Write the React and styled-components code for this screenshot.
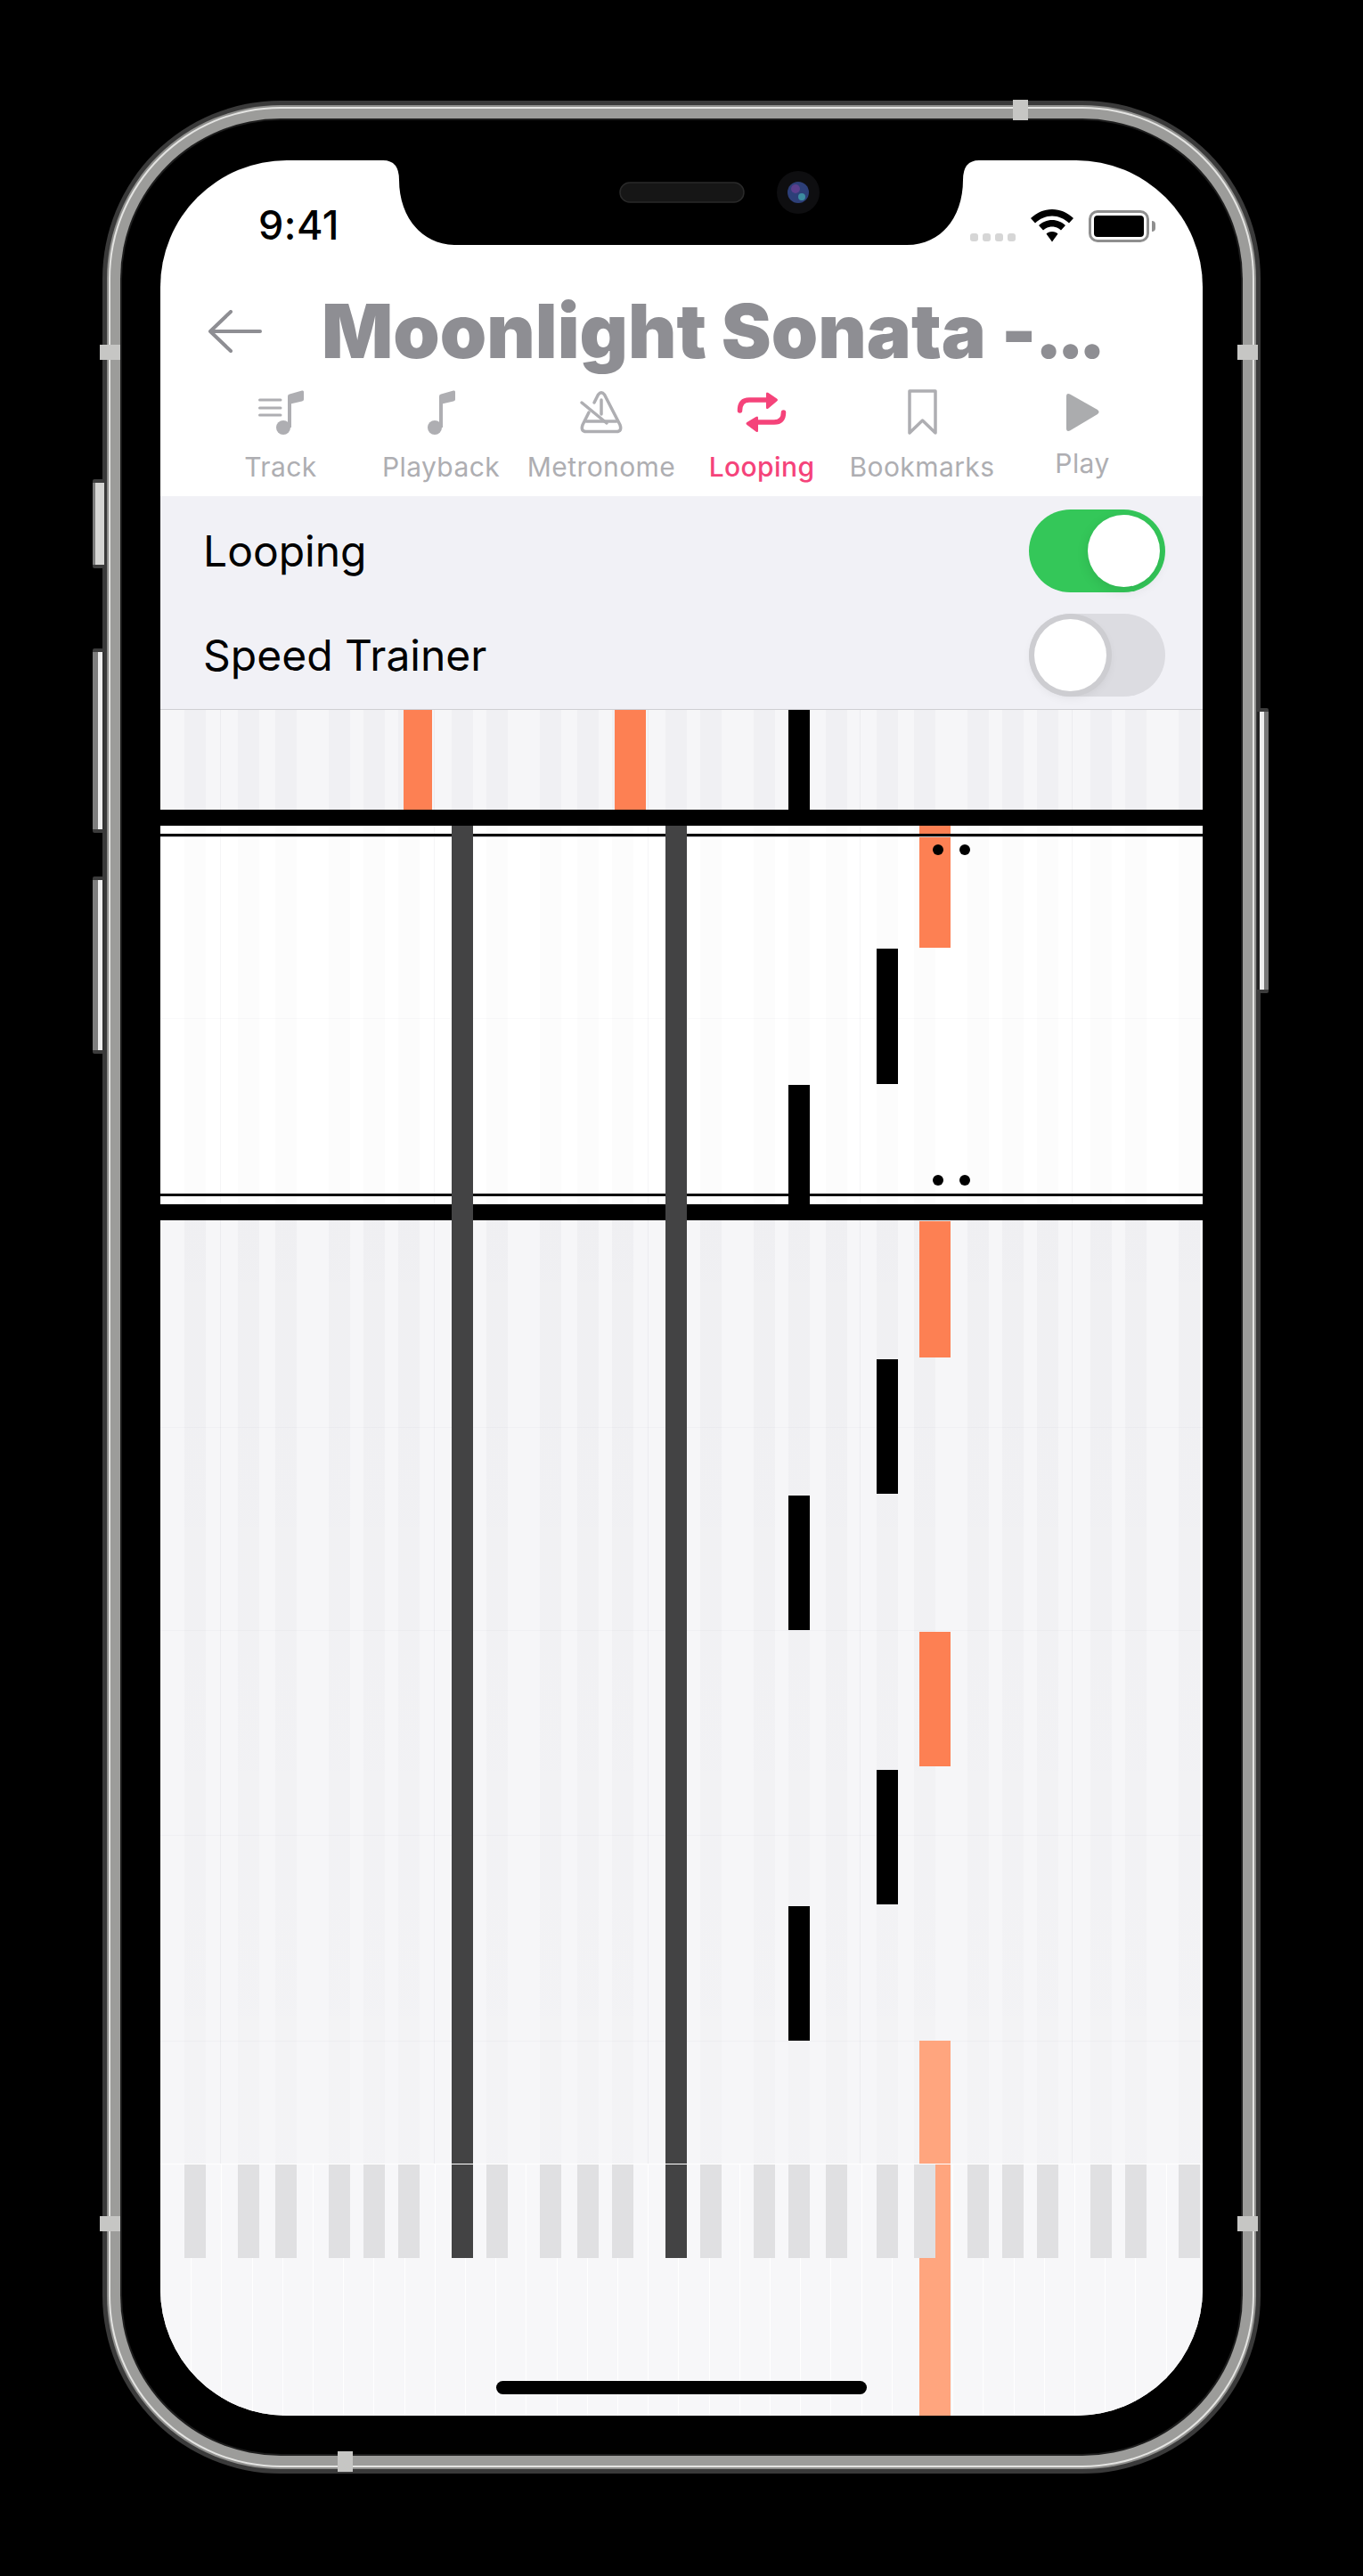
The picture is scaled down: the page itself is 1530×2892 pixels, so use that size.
import React from 'react'
import styled, { createGlobalStyle } from 'styled-components'

const GlobalStyle = createGlobalStyle`
    html, body {
        margin: 0;
        background: #000;
    }
`

const ROLL_TOP = 797
const blackKeys = [207, 267, 309, 369, 408, 447, 507, 546, 606, 648, 687, 747, 786, 846, 885, 927, 984, 1026, 1086, 1125, 1164, 1224, 1263, 1323]
const octaveLines = [247, 487, 727, 965, 1203]
const whiteKeyLines = Array.from({ length: 33 }, (_, i) => 180 + 34.2 * (i + 1))

const notes = [
    { x: 453, w: 32, y: 797, h: 112, kind: 'orange' },
    { x: 690, w: 35, y: 797, h: 112, kind: 'orange' },
    { x: 885, w: 24, y: 797, h: 112, kind: 'black' },
    { x: 507, w: 24, y: 927, h: 1608, kind: 'dark' },
    { x: 747, w: 24, y: 927, h: 1608, kind: 'dark' },
    { x: 1032, w: 35, y: 927, h: 137, kind: 'orange' },
    { x: 984, w: 24, y: 1065, h: 152, kind: 'black' },
    { x: 885, w: 24, y: 1218, h: 152, kind: 'black' },
    { x: 1032, w: 35, y: 1371, h: 153, kind: 'orange' },
    { x: 984, w: 24, y: 1526, h: 151, kind: 'black' },
    { x: 885, w: 24, y: 1679, h: 151, kind: 'black' },
    { x: 1032, w: 35, y: 1832, h: 151, kind: 'orange' },
    { x: 984, w: 24, y: 1987, h: 151, kind: 'black' },
    { x: 885, w: 24, y: 2140, h: 151, kind: 'black' },
    { x: 1032, w: 35, y: 2291, h: 421, kind: 'light' },
]

const beatLines = [1143, 1602, 1830, 2060, 2291]

const repeatDots = [
    { x: 1053, y: 954 },
    { x: 1083, y: 954 },
    { x: 1053, y: 1325 },
    { x: 1083, y: 1325 },
]

const tabs = [
    { label: 'Track', icon: <TrackIcon /> },
    { label: 'Playback', icon: <NoteIcon /> },
    { label: 'Metronome', icon: <MetronomeIcon /> },
    { label: 'Looping', icon: <LoopIcon />, active: true },
    { label: 'Bookmarks', icon: <BookmarkIcon /> },
    { label: 'Play', icon: <PlayIcon />, raised: true },
]

const Page = styled.div`
    width: 1530px;
    height: 2892px;
    box-sizing: border-box;
    padding: 135px 137px;
    background: #000;
    overflow: hidden;
`

const Device = styled.div`
    position: relative;
    width: 1256px;
    height: 2620px;
    box-sizing: border-box;
    padding: 45px 43px 43px;
    background: #000;
    border-radius: 178px;
    box-shadow:
        0 0 0 2px #1d1d1d,
        0 0 0 13px #9c9c9a,
        0 0 0 15px #e4e4e2,
        0 0 0 17px #8f8f8d,
        0 0 0 22px #3a3a3a;
`

const SideButton = styled.div`
    position: absolute;
    width: 13px;
    top: ${props => props.$top}px;
    height: ${props => props.$height}px;
    ${props => props.$right ? 'right: -31px;' : 'left: -33px;'}
    box-sizing: border-box;
    background: ${props => props.$mute ? 'linear-gradient(90deg, #7c7c7c 0 25%, #d5d5d3 25% 100%)' : props.$right ? 'linear-gradient(90deg, #222 0 20%, #eee 20% 65%, #777 65% 100%)' : 'linear-gradient(90deg, #7e7e7e 0 45%, #eee 45% 85%, #333 85% 100%)'};
    border-top: 4px solid #3c3c3c;
    border-bottom: 4px solid #3c3c3c;
    border-radius: 2px;
`

const AntennaBand = styled.div`
    position: absolute;
    background: #c6c6c4;
    ${props => props.$horizontal ? `
        width: 17px;
        height: 23px;
        left: ${props.$pos}px;
        ${props.$bottom ? 'bottom: -20px;' : 'top: -23px;'}
    ` : `
        width: 23px;
        height: 17px;
        top: ${props.$pos}px;
        ${props.$right ? 'right: -19px;' : 'left: -25px;'}
    `}
`

const Screen = styled.div`
    position: relative;
    width: 1170px;
    height: 2532px;
    background: #fff;
    border-radius: 142px;
    overflow: hidden;
    font-family: Inter, sans-serif;
    display: flex;
    flex-direction: column;
`

const Notch = styled.svg`
    position: absolute;
    left: 0;
    top: 0;
    width: 1170px;
    height: 100px;
    z-index: 6;
`

const StatusBar = styled.div`
    height: 95px;
    flex: none;
    display: flex;
    align-items: flex-end;
    justify-content: space-between;
    padding: 0 60px 0 110px;
`

const Time = styled.div`
    font-size: 45px;
    font-weight: 500;
    line-height: 40px;
    margin-bottom: 2px;
    color: #000;
    letter-spacing: 0.5px;
`

const StatusIcons = styled.div`
    display: flex;
    align-items: flex-end;
    margin-bottom: 3px;
`

const SignalDots = styled.div`
    display: flex;
    gap: 5px;
    margin-right: 17px;
    margin-bottom: 1px;
`

const SignalDot = styled.span`
    width: 9px;
    height: 9px;
    border-radius: 3px;
    background: #d6d6d6;
`

const Battery = styled.div`
    position: relative;
    width: 68px;
    height: 36px;
    box-sizing: border-box;
    margin-left: 17px;
    border: 3px solid #8f8f8f;
    border-radius: 10px;
    background: #fff;
    padding: 3px;

    &::before {
        content: '';
        display: block;
        height: 100%;
        border-radius: 4px;
        background: #000;
    }

    &::after {
        content: '';
        position: absolute;
        right: -10px;
        top: 9px;
        width: 4px;
        height: 12px;
        border-radius: 0 4px 4px 0;
        background: #8f8f8f;
    }
`

const Header = styled.div`
    height: 160px;
    flex: none;
    box-sizing: border-box;
    display: flex;
    align-items: center;
    padding: 34px 0 0 54px;
`

const BackIcon = styled.svg`
    width: 60px;
    height: 48px;
    flex: none;
`

const Title = styled.h1`
    margin: 0 0 0 67px;
    font-size: 84px;
    font-weight: 900;
    line-height: 100px;
    color: #8e8e93;
    white-space: nowrap;
`

const TitleDots = styled.span`
    letter-spacing: -7px;
    margin-left: -2px;
`

const TabBar = styled.div`
    height: 122px;
    flex: none;
    box-sizing: border-box;
    display: grid;
    grid-template-columns: repeat(6, 180px);
    padding: 2px 45px 0;
`

const Tab = styled.div`
    display: flex;
    flex-direction: column;
    align-items: center;
    color: ${props => props.$active ? '#f5437a' : '#aeaeb2'};
    font-size: 30px;
    font-weight: ${props => props.$active ? 500 : 400};
    letter-spacing: 0.4px;
`

const TabIcon = styled.div`
    height: 52px;
    display: flex;
    align-items: center;
`

const TabLabel = styled.span`
    margin-top: ${props => props.$raised ? 13 : 17}px;
    line-height: 36px;
    white-space: nowrap;
`

const OptionsPanel = styled.div`
    flex: none;
    height: 240px;
    box-sizing: border-box;
    background: #f1f1f6;
    border-bottom: 1px solid #cfcfd3;
    padding: 3px 42px 0 48px;
`

const OptionRow = styled.div`
    height: 117px;
    display: flex;
    align-items: center;
    justify-content: space-between;
    font-size: 48px;
    color: #000;
`

const Toggle = styled.div`
    position: relative;
    width: 153px;
    height: 93px;
    box-sizing: border-box;
    border-radius: 47px;
    background: ${props => props.$on ? '#34c759' : '#dcdce1'};

    &::after {
        content: '';
        position: absolute;
        top: 6px;
        ${props => props.$on ? 'right: 6px;' : 'left: 6px;'}
        width: 81px;
        height: 81px;
        border-radius: 50%;
        background: #fff;
        box-shadow: ${props => props.$on ? '0 4px 14px rgba(0, 0, 0, 0.1)' : '0 0 0 6px #cdcdd1, 0 4px 14px rgba(0, 0, 0, 0.12)'};
    }
`

const Roll = styled.div`
    position: relative;
    flex: 1;
    display: flex;
    flex-direction: column;
    isolation: isolate;
`

const Section = styled.div`
    position: relative;
    flex: none;
    height: ${props => props.$height}px;
    background: ${props => props.$white ? '#fff' : '#f6f6f8'};
    overflow: hidden;
`

const laneFill = props => {
    if (props.$faint) return 'rgba(0, 0, 30, 0.012)'
    if (props.$fade) return 'linear-gradient(rgba(0, 0, 30, 0.026), rgba(0, 0, 30, 0.012))'
    return 'rgba(0, 0, 30, 0.025)'
}

const Lane = styled.div`
    position: absolute;
    top: 0;
    bottom: 0;
    left: ${props => props.$x - 180}px;
    width: 24px;
    background: ${laneFill};
`

const OctaveLine = styled.div`
    position: absolute;
    top: 0;
    bottom: 0;
    left: ${props => props.$x - 180}px;
    width: 1px;
    background: rgba(0, 0, 30, 0.04);
`

const BeatLine = styled.div`
    position: absolute;
    left: 0;
    right: 0;
    top: ${props => props.$y - ROLL_TOP}px;
    height: 1px;
    background: rgba(0, 0, 30, 0.025);
`

const BarLine = styled.div`
    flex: none;
    height: 18px;
    background: #000;
    position: relative;
    z-index: 2;
`

const ThinLine = styled.div`
    position: absolute;
    left: 0;
    right: 0;
    top: ${props => props.$y - ROLL_TOP}px;
    height: 3px;
    background: #000;
    ${props => props.$shaded && 'box-shadow: 0 1px 0 #c9c9cb;'}
    z-index: 2;
`

const Note = styled.div`
    position: absolute;
    left: ${props => props.$x - 180}px;
    top: ${props => props.$y - ROLL_TOP}px;
    width: ${props => props.$w}px;
    height: ${props => props.$h}px;
    background: ${props => ({ orange: '#fd8053', light: '#ffa57e', black: '#000', dark: '#434344' }[props.$kind])};
    z-index: ${props => props.$kind === 'black' || props.$kind === 'dark' ? 3 : 1};
`

const RepeatDot = styled.div`
    position: absolute;
    left: ${props => props.$x - 186}px;
    top: ${props => props.$y - ROLL_TOP - 6}px;
    width: 12px;
    height: 12px;
    border-radius: 50%;
    background: #000;
    z-index: 4;
`

const Piano = styled.div`
    position: relative;
    flex: 1;
    background: #f7f7f9;
`

const PianoEdge = styled.div`
    position: absolute;
    left: 0;
    right: 0;
    top: 0;
    height: 1px;
    background: #fff;
    z-index: 4;
`

const WhiteKeyLine = styled.div`
    position: absolute;
    top: 0;
    bottom: 0;
    left: ${props => props.$x - 180}px;
    width: 1px;
    background: #fff;
`

const PianoKey = styled.div`
    position: absolute;
    top: 0;
    height: 106px;
    left: ${props => props.$x - 180}px;
    width: 24px;
    background: #e0e0e2;
    z-index: 2;
`

const HomeIndicator = styled.div`
    position: absolute;
    left: 377px;
    bottom: 24px;
    width: 416px;
    height: 15px;
    border-radius: 8px;
    background: #000;
    z-index: 6;
`

function NoteShape({ dx = 0 }) {
    return (
        <g transform={`translate(${dx} 0)`} fill="#aeaeb2">
            <circle cx="8" cy="42" r="8" />
            <path d="M13 7 Q13 5 15 4.6 L29 0.6 Q31 0 31 2 V10.6 Q31 12 29 12.4 L17 15.2 V42 H13 Z" />
        </g>
    )
}

function TrackIcon() {
    return (
        <svg width="51" height="50" viewBox="0 0 51 50">
            <path d="M1.5 11 H25 M1.5 20 H25 M1.5 28 H25" stroke="#aeaeb2" strokeWidth="3" strokeLinecap="round" />
            <NoteShape dx={20} />
        </svg>
    )
}

function NoteIcon() {
    return (
        <svg width="31" height="50" viewBox="0 0 31 50">
            <NoteShape />
        </svg>
    )
}

function MetronomeIcon() {
    return (
        <svg width="50" height="50" viewBox="0 0 50 50" fill="none" stroke="#aeaeb2" strokeWidth="3.5" strokeLinecap="round" strokeLinejoin="round">
            <path d="M17 14 L21.5 5 Q25 0.5 28.5 5 L46 39 Q48.5 46.5 42 46.5 H8 Q1.5 46.5 4 39 L11 25" />
            <path d="M3 14 L31 37" />
            <path d="M8 35 H42" />
            <path d="M25 11 V27" />
        </svg>
    )
}

function LoopIcon() {
    return (
        <svg width="58" height="50" viewBox="0 0 58 50">
            <g fill="none" stroke="#f5437a" strokeWidth="5.5" strokeLinecap="round">
                <path d="M4.5 23 Q4.5 11 15 11 H36" />
                <path d="M53.5 25 Q53.5 36 43 36 H24" />
            </g>
            <path d="M34 4 Q34 1.5 36.5 3 L46 9.5 Q48 11 46 12.5 L36.5 20.5 Q34 22 34 19.5 Z" fill="#f5437a" />
            <path d="M25 31 Q25 28.5 22.5 30 L12.5 36 Q10.5 37.5 12.5 39 L22.5 46.5 Q25 48 25 45.5 Z" fill="#f5437a" />
        </svg>
    )
}

function BookmarkIcon() {
    return (
        <svg width="35" height="52" viewBox="0 0 35 52">
            <path d="M3 2 H32 V49 L17.5 35 L3 49 Z" fill="none" stroke="#aeaeb2" strokeWidth="3.5" strokeLinejoin="round" />
        </svg>
    )
}

function PlayIcon() {
    return (
        <svg width="37" height="44" viewBox="0 0 37 44">
            <path d="M0 4 Q0 0 4 1.5 L35 19 Q38 21.5 35 24 L4 42.5 Q0 44 0 40 Z" fill="#abacae" />
        </svg>
    )
}

const Lanes = ({ faint, fade }) => (
    <>
        {blackKeys.map(x => <Lane key={x} $x={x} $faint={faint} $fade={fade} />)}
        {octaveLines.map(x => <OctaveLine key={x} $x={x} />)}
    </>
)

const App = () => {
    return (
        <Page>
            <GlobalStyle />
            <Device>
                <SideButton $mute $top={403} $height={100} />
                <SideButton $top={593} $height={207} />
                <SideButton $top={849} $height={199} />
                <SideButton $right $top={660} $height={320} />
                <AntennaBand $horizontal $pos={1000} />
                <AntennaBand $horizontal $bottom $pos={242} />
                <AntennaBand $pos={252} />
                <AntennaBand $pos={252} $right />
                <AntennaBand $pos={2353} />
                <AntennaBand $pos={2353} $right />
                <Screen>
                    <Notch viewBox="0 0 1170 100">
                        <path d="M250 0 Q268 0 268 22 C268 62 292 95 332 95 H838 C878 95 901 62 901 22 Q901 0 919 0 Z" fill="#000" />
                        <rect x="516" y="25" width="139" height="22" rx="11" fill="#161616" stroke="#2a2a2a" strokeWidth="1.5" />
                        <circle cx="716" cy="36" r="24" fill="#0e0e10" />
                        <circle cx="716" cy="36" r="12" fill="#2d3f78" />
                        <circle cx="713" cy="32" r="5" fill="#5b3f8d" />
                        <circle cx="720" cy="41" r="4" fill="#3c8ca0" />
                    </Notch>
                    <StatusBar>
                        <Time>9:41</Time>
                        <StatusIcons>
                            <SignalDots>
                                <SignalDot />
                                <SignalDot />
                                <SignalDot />
                                <SignalDot />
                            </SignalDots>
                            <svg width="48" height="37" viewBox="0 0 48 37">
                                <path d="M24 0 C33 0 41 3.5 48 10 L43 15.5 C38 10.5 31 7.5 24 7.5 C17 7.5 10 10.5 5 15.5 L0 10 C7 3.5 15 0 24 0 Z" />
                                <path d="M24 12 C30 12 35 14.5 39 18 L34 23.5 C31 21 28 19.5 24 19.5 C20 19.5 17 21 14 23.5 L9 18 C13 14.5 18 12 24 12 Z" />
                                <path d="M24 25 C27 25 29 26 30.5 27.5 L24 36.5 L17.5 27.5 C19 26 21 25 24 25 Z" />
                            </svg>
                            <Battery />
                        </StatusIcons>
                    </StatusBar>
                    <Header>
                        <BackIcon viewBox="0 0 60 48" fill="none" stroke="#8e8e93" strokeWidth="4" strokeLinecap="round" strokeLinejoin="round">
                            <path d="M25 2 L2 24 L25 46 M2 24 H58" />
                        </BackIcon>
                        <Title>Moonlight Sonata -<TitleDots>...</TitleDots></Title>
                    </Header>
                    <TabBar>
                        {tabs.map(tab => (
                            <Tab key={tab.label} $active={tab.active}>
                                <TabIcon>{tab.icon}</TabIcon>
                                <TabLabel $raised={tab.raised}>{tab.label}</TabLabel>
                            </Tab>
                        ))}
                    </TabBar>
                    <OptionsPanel>
                        <OptionRow>
                            Looping
                            <Toggle $on />
                        </OptionRow>
                        <OptionRow>
                            Speed Trainer
                            <Toggle />
                        </OptionRow>
                    </OptionsPanel>
                    <Roll>
                        <Section $height={112}>
                            <Lanes />
                        </Section>
                        <BarLine />
                        <Section $white $height={425}>
                            <Lanes faint />
                        </Section>
                        <BarLine />
                        <Section $height={1059}>
                            <Lanes fade />
                        </Section>
                        <Piano>
                            <PianoEdge />
                            {whiteKeyLines.map(x => <WhiteKeyLine key={x} $x={x} />)}
                            {blackKeys.map(x => <PianoKey key={x} $x={x} />)}
                        </Piano>
                        {beatLines.map(y => <BeatLine key={y} $y={y} />)}
                        <ThinLine $shaded $y={936} />
                        <ThinLine $y={1340} />
                        {notes.map(note => (
                            <Note key={`${note.x}-${note.y}`} $x={note.x} $y={note.y} $w={note.w} $h={note.h} $kind={note.kind} />
                        ))}
                        {repeatDots.map(dot => <RepeatDot key={`${dot.x}-${dot.y}`} $x={dot.x} $y={dot.y} />)}
                    </Roll>
                    <HomeIndicator />
                </Screen>
            </Device>
        </Page>
    )
}

export default App
